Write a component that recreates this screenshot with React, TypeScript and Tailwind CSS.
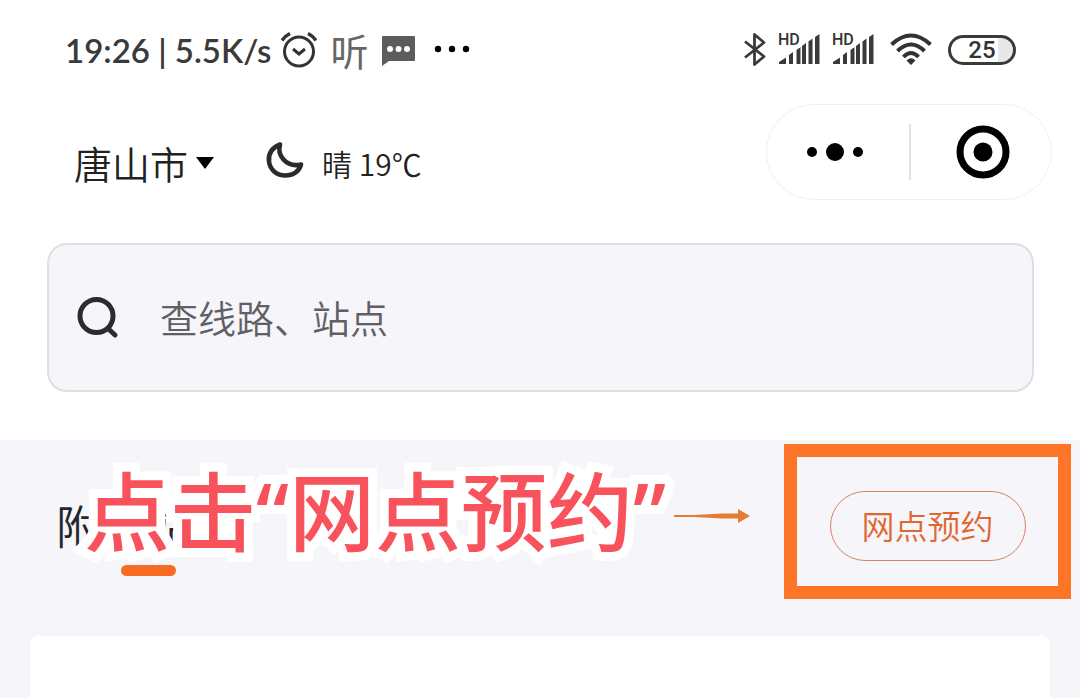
import React from "react";

function AlarmIcon() {
  return (
    <svg className="h-9 w-9" viewBox="0 0 36 36" fill="none" stroke="#333" strokeLinecap="butt">
      <circle cx="18" cy="19.500" r="14.500" strokeWidth="3" />
      <path d="M12 17l6 5 6-5" strokeWidth="3" />
      <path d="M1 8.500Q4 4 9 1.500M35 8.500Q32 4 27 1.500" strokeWidth="3.400" />
    </svg>
  );
}

function MessageIcon() {
  return (
    <svg className="h-8 w-[34px]" viewBox="0 0 34 32">
      <path d="M2 2h31q1 0 1 1v23q0 1-1 1H8l-7 5V3q0-1 1-1z" fill="#5c5c5c" />
      <circle cx="9" cy="15" r="3" fill="#fff" />
      <circle cx="17.500" cy="15" r="3" fill="#fff" />
      <circle cx="26" cy="15" r="3" fill="#fff" />
    </svg>
  );
}

function MoreIcon() {
  return (
    <svg className="h-9 w-9" viewBox="0 0 36 36">
      <circle cx="4" cy="17" r="3.200" />
      <circle cx="18" cy="17" r="3.200" />
      <circle cx="32" cy="17" r="3.200" />
    </svg>
  );
}

function BluetoothIcon() {
  return (
    <svg className="h-9 w-6" viewBox="0 0 24 36" fill="none" stroke="#3a3a3a" strokeWidth="2.800" strokeLinejoin="round">
      <path d="M3 9.500L22 24.500 12.500 32.500V2.500L22 10.500 3 25.500" />
    </svg>
  );
}

function SignalIcon() {
  return (
    <span className="relative block h-9 w-[42px]">
      <svg className="h-9 w-[42px]" viewBox="0 0 42 36" fill="#3a3a3a">
        <path d="M1 32v-2l7-4.500V32zM11 32v-9l4-3v12zM18.500 32V18l4-3v17zM24 32V14l4-3v21zM30.500 32V9.500l4-3V32zM37 32V5l4.500-3v30z" />
      </svg>
      <span className="absolute left-0 top-0 bg-white font-[Roboto,sans-serif] text-base leading-4 font-medium text-[#333]">
        HD
      </span>
    </span>
  );
}

function WifiIcon() {
  return (
    <svg className="h-9 w-[42px]" viewBox="0 0 42 36" fill="none" stroke="#333">
      <path d="M1.500 12.500Q21-5.500 40.500 12.500" strokeWidth="4" />
      <path d="M7.500 19Q21 6 34.500 19" strokeWidth="4" />
      <path d="M13.500 25Q21 17 28.500 25" strokeWidth="4" />
      <path d="M21 33l-4.500-4.500Q21 24 25.500 28.500z" fill="#333" stroke="none" />
    </svg>
  );
}

function MoonIcon() {
  return (
    <svg className="h-10 w-10" viewBox="0 0 40 40" fill="none" stroke="#2b2b2b" strokeWidth="4.600" strokeLinejoin="round">
      <path d="M15 4.500C7 7.500 3 14 4 21.500 5 30 12 35.500 20.500 35.500 28 35.500 34 31.500 36 24.500 29 26 22.500 24 18.500 19.500 14.500 15 13.500 9.500 15 4.500z" />
    </svg>
  );
}

function SearchIcon() {
  return (
    <svg className="h-[42px] w-[42px] shrink-0" viewBox="0 0 42 42" fill="none" stroke="#2b2b31" strokeWidth="5" strokeLinecap="round">
      <circle cx="19.500" cy="19" r="16.500" />
      <path d="M31.500 32l6.500 6" />
    </svg>
  );
}

function StatusBar() {
  return (
    <div className="flex h-[100px] items-center justify-between pl-[65px] pr-16">
      <div className="flex items-center">
        <span className="font-[Lato,sans-serif] text-[33px] leading-10 font-semibold whitespace-pre text-[#3a3a3a]">
          19:26 | 5.5K/s
        </span>
        <div className="ml-[10px] flex items-center gap-[13px]">
          <AlarmIcon />
          <span className="text-[38px] leading-10 text-[#666]">听</span>
          <MessageIcon />
          <span className="ml-1.5">
            <MoreIcon />
          </span>
        </div>
      </div>
      <div className="flex items-center gap-3">
        <BluetoothIcon />
        <SignalIcon />
        <SignalIcon />
        <span className="mx-1">
          <WifiIcon />
        </span>
        <span className="flex h-[30px] w-[68px] items-center justify-center rounded-full border-[3px] border-[#3a3a3a] bg-linear-to-r from-white from-75% to-[#e8e8e8] to-75% font-[Roboto,sans-serif] text-2xl leading-6 font-medium text-[#333]">
          25
        </span>
      </div>
    </div>
  );
}

function Header() {
  return (
    <header className="flex h-[143px] items-start justify-between pl-[74px] pr-7">
      <div className="flex items-center pt-[35px]">
        <button type="button" className="flex items-center gap-2 text-[38px] leading-[56px] font-[350] text-[#222]">
          唐山市
          <svg className="h-3 w-[18px]" viewBox="0 0 18 12">
            <path d="M0 0h18L9 12z" />
          </svg>
        </button>
        <div className="ml-[51px] flex items-center gap-[17px]">
          <span className="pb-1.5">
            <MoonIcon />
          </span>
          <span className="text-[30px] leading-[56px] font-[350] text-[#222]">晴 19℃</span>
        </div>
      </div>
      <div className="mt-1 flex h-24 w-[286px] items-center rounded-full border border-[#f0f0f0]">
        <button type="button" aria-label="更多" className="flex flex-1 justify-center pr-1.5">
          <svg className="h-5 w-14" viewBox="0 0 56 20">
            <circle cx="5" cy="10" r="5" />
            <circle cx="28" cy="10" r="9" />
            <circle cx="51" cy="10" r="5" />
          </svg>
        </button>
        <span className="h-14 w-0.5 bg-[#e2e2e2]" />
        <button type="button" aria-label="关闭" className="flex flex-1 justify-center pl-1">
          <svg className="h-[54px] w-[54px]" viewBox="0 0 54 54">
            <circle cx="27" cy="27" r="23" fill="none" stroke="#000" strokeWidth="7" />
            <circle cx="27" cy="27" r="9.500" />
          </svg>
        </button>
      </div>
    </header>
  );
}

export default function App() {
  return (
    <div className="min-h-screen overflow-hidden bg-white font-['Noto_Sans_CJK_SC',sans-serif]">
      <StatusBar />
      <Header />
      <div className="pr-[46px] pl-[47px]">
        <label className="flex h-[149px] items-center gap-[41px] rounded-[20px] border-2 border-[#dedfe1] bg-[#f5f5fa] px-7">
          <SearchIcon />
          <input
            type="text"
            aria-label="查线路、站点"
            placeholder="查线路、站点"
            className="min-w-0 flex-1 bg-transparent pb-0.5 text-[38px] leading-[56px] font-[350] outline-none placeholder:text-[#606064] placeholder:opacity-100"
          />
        </label>
      </div>

      <main className="mt-12 bg-[#f5f5fa] px-7">
        <div className="relative flex h-[196px] items-start justify-between pt-1 pl-7">
          <div className="flex flex-col items-center pt-12">
            <h2 className="text-[46px] leading-[64px] font-[350] text-[#25262b]">附近站点</h2>
            <span className="mt-[9px] h-[11px] w-[55px] rounded-full bg-[#f86b22]" />
          </div>
          <div className="-mr-[19px] flex h-[155px] w-[287px] items-center justify-center border-[13px] border-[#ff7527] pt-2">
            <button
              type="button"
              className="h-[70px] w-[196px] rounded-full border border-[#d98262] pb-0.5 text-[33px] leading-[48px] font-[350] text-[#e2662f]"
            >
              网点预约
            </button>
          </div>
          <div className="absolute top-2 left-14 flex items-center gap-2">
            <strong className="font-['Noto_Sans','Noto_Sans_CJK_SC',sans-serif] text-[86px] leading-[128px] font-medium whitespace-nowrap text-[#f8525c] [-webkit-text-stroke:18px_white] [paint-order:stroke_fill] [stroke-linejoin:round]">
              点击“网点预约”
            </strong>
            <svg className="mt-2 h-4 w-[76px]" viewBox="0 0 76 16" fill="#e57c35">
              <path d="M0 7l20 0 28-1.500h16V1l12 7-12 7v-4.500H48L20 9H0z" />
            </svg>
          </div>
        </div>
        <div className="mx-0.5 h-[62px] rounded-t-lg bg-white" />
      </main>
    </div>
  );
}
